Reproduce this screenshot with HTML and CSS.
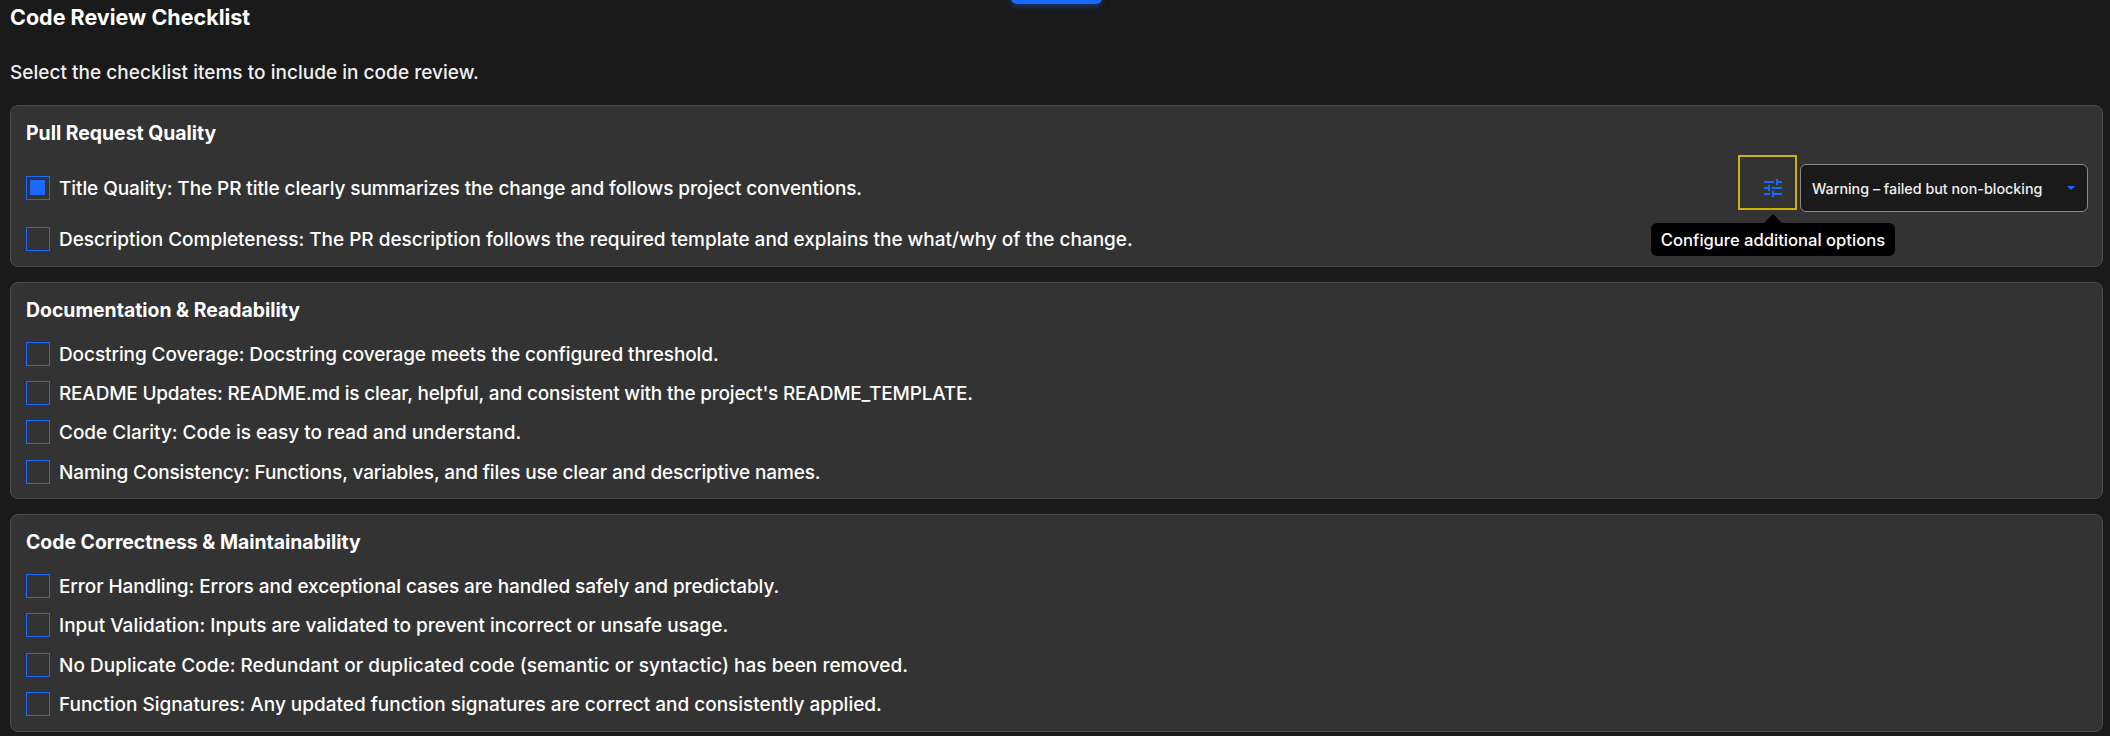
FILE: index.html
```
<!DOCTYPE html>
<html lang="en">
<head>
    <meta charset="UTF-8">
    <meta name="viewport" content="width=device-width, initial-scale=1.0">
    <title>Code Review Checklist</title>
    <link rel="stylesheet" href="styles.css">
</head>
<body>
    <div class="top-button"></div>

    <h2 class="page-title">Code Review Checklist</h2>
    <p class="intro">Select the checklist items to include in code review.</p>

    <div class="cards">
        <section class="card">
            <h3 class="card-title">Pull Request Quality</h3>
            <div class="item item-tall">
                <span class="checkbox checked"></span>
                <span class="label snug">Title Quality: The PR title clearly summarizes the change and follows project conventions.</span>
                <div class="item-options">
                    <div class="configure">
                        <svg class="tune-icon" viewBox="0 0 24 24" width="24" height="24">
                            <path fill="#1a6aff" d="M3 17v2h6v-2H3zM3 5v2h10V5H3zm10 16v-2h8v-2h-8v-2h-2v6h2zM7 9v2H3v2h4v2h2V9H7zm14 4v-2H11v2h10zm-6-4h2V7h4V5h-4V3h-2v6z"/>
                        </svg>
                        <div class="highlight"></div>
                        <div class="tooltip">Configure additional options</div>
                    </div>
                    <div class="select">
                        <span>Warning – failed but non-blocking</span>
                        <span class="select-arrow"></span>
                    </div>
                </div>
            </div>
            <div class="item">
                <span class="checkbox"></span>
                <span class="label">Description Completeness: The PR description follows the required template and explains the what/why of the change.</span>
            </div>
        </section>

        <section class="card">
            <h3 class="card-title">Documentation &amp; Readability</h3>
            <div class="item">
                <span class="checkbox"></span>
                <span class="label snug">Docstring Coverage: Docstring coverage meets the configured threshold.</span>
            </div>
            <div class="item">
                <span class="checkbox"></span>
                <span class="label tighter">README Updates: README.md is clear, helpful, and consistent with the project's README_TEMPLATE.</span>
            </div>
            <div class="item">
                <span class="checkbox"></span>
                <span class="label">Code Clarity: Code is easy to read and understand.</span>
            </div>
            <div class="item">
                <span class="checkbox"></span>
                <span class="label tight">Naming Consistency: Functions, variables, and files use clear and descriptive names.</span>
            </div>
        </section>

        <section class="card">
            <h3 class="card-title">Code Correctness &amp; Maintainability</h3>
            <div class="item">
                <span class="checkbox"></span>
                <span class="label snug">Error Handling: Errors and exceptional cases are handled safely and predictably.</span>
            </div>
            <div class="item">
                <span class="checkbox"></span>
                <span class="label">Input Validation: Inputs are validated to prevent incorrect or unsafe usage.</span>
            </div>
            <div class="item">
                <span class="checkbox"></span>
                <span class="label wide">No Duplicate Code: Redundant or duplicated code (semantic or syntactic) has been removed.</span>
            </div>
            <div class="item">
                <span class="checkbox"></span>
                <span class="label">Function Signatures: Any updated function signatures are correct and consistently applied.</span>
            </div>
        </section>
    </div>
</body>
</html>
```
FILE: styles.css
```
* {
    box-sizing: border-box;
}

body {
    margin: 0;
    padding: 0 7px 0 10px;
    height: 736px;
    overflow: hidden;
    background-color: #1a1a1a;
    color: #fff;
    font-family: Inter, sans-serif;
    font-weight: 500;
    font-size: 19px;
}

/* Bottom edge of the button above the checklist */
.top-button {
    position: absolute;
    top: -36px;
    left: 1011px;
    width: 91px;
    height: 40px;
    border-radius: 6px;
    background-color: #1a6aff;
    box-shadow: 0 2px 6px rgba(26, 106, 255, 0.4);
}

.page-title {
    margin: 0;
    padding-top: 3px;
    font-size: 21.5px;
    font-weight: 700;
    line-height: 28px;
}

.intro {
    margin: 28px 0 18px;
    line-height: 28px;
    letter-spacing: 0.03px;
    color: #f0f0f0;
}

.cards {
    display: flex;
    flex-direction: column;
    gap: 14.67px;
}

.card {
    padding: 16px 14px 7px 15px;
    border: 1px solid #4d4d4d;
    border-radius: 8px;
    background-color: #333;
}

.card-title {
    margin: 0 0 13.33px;
    font-size: 19.4px;
    font-weight: 700;
    line-height: 22px;
}

/* Checklist rows */
.item {
    display: flex;
    align-items: center;
    height: 39.33px;
}

.item-tall {
    height: 62.33px;
}

.checkbox {
    flex: none;
    width: 24px;
    height: 24px;
    margin-right: 9px;
    padding: 3px;
    border: 1px solid #1a6aff;
}

.checked::before {
    content: "";
    display: block;
    width: 15px;
    height: 15px;
    background-color: #1a6aff;
}

.label {
    padding-top: 1px;
    letter-spacing: -0.02px;
    white-space: nowrap;
}

.snug {
    letter-spacing: -0.09px;
}

.tight {
    letter-spacing: -0.14px;
}

.tighter {
    letter-spacing: -0.2px;
}

.wide {
    letter-spacing: 0.03px;
}

/* Options on the right of a checked row */
.item-options {
    display: flex;
    align-items: center;
    gap: 15px;
    margin-left: auto;
}

.configure {
    position: relative;
    height: 24px;
}

.tune-icon {
    display: block;
}

.highlight {
    position: absolute;
    top: -21px;
    left: -23px;
    width: 59px;
    height: 55px;
    border: 2px solid #c9b40c;
}

.tooltip {
    position: absolute;
    top: 47px;
    left: 50%;
    transform: translateX(-50%);
    width: 244px;
    padding-top: 1px;
    border-radius: 6px;
    background-color: #000;
    font-size: 16.6px;
    line-height: 32px;
    text-align: center;
    white-space: nowrap;
}

.tooltip::before {
    content: "";
    position: absolute;
    bottom: 100%;
    left: 50%;
    margin-left: -9px;
    border: 9px solid transparent;
    border-top: none;
    border-bottom-color: #000;
}

.select {
    display: flex;
    align-items: center;
    justify-content: space-between;
    width: 288px;
    height: 48px;
    padding: 0 12px 0 11px;
    border: 1px solid #8a8a8a;
    border-radius: 6px;
    background-color: #1a1a1a;
    color: #f0f0f0;
    font-size: 14.3px;
}

.select-arrow {
    border: 4px solid transparent;
    border-top-color: #1a6aff;
    border-bottom: none;
}
```
